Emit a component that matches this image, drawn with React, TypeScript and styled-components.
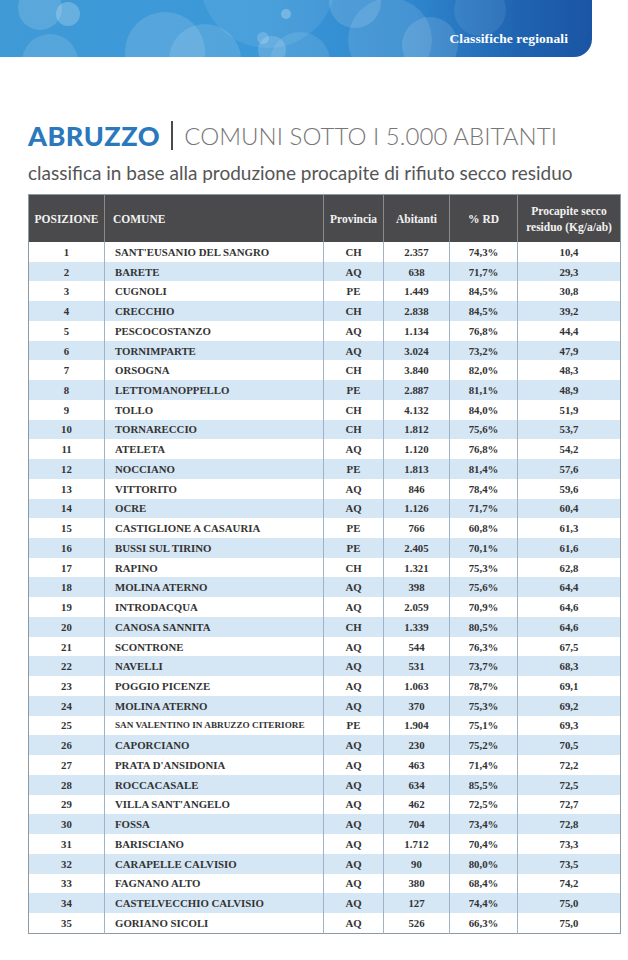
import React from "react";
import styled, { createGlobalStyle } from "styled-components";

const Global = createGlobalStyle`
  html, body { margin: 0; padding: 0; background: #ffffff; }
  body { width: 628px; height: 960px; overflow: hidden; }
`;

const Page = styled.div`
  width: 628px;
  height: 960px;
  background: #ffffff;
  display: flex;
  flex-direction: column;
`;

const Banner = styled.header`
  position: relative;
  width: 592px;
  height: 57px;
  border-bottom-right-radius: 18px;
  overflow: hidden;
  background: linear-gradient(90deg, #3f9ad6 0%, #3b98d8 45%, #2f86cd 70%, #1f63b0 88%, #1a55a4 100%);
  display: flex;
  align-items: flex-end;
  justify-content: flex-end;
  padding: 0 24px 10px 0;
  box-sizing: border-box;
`;

const Bubbles = styled.svg`
  position: absolute;
  inset: 0;
`;

const BannerLabel = styled.span`
  position: relative;
  color: #ffffff;
  font-family: "Liberation Serif", "DejaVu Serif", serif;
  font-size: 13.5px;
  font-weight: 700;
  letter-spacing: 0.1px;
`;

const TitleBlock = styled.div`
  margin: 60px 0 0 28px;
  display: flex;
  flex-direction: column;
`;

const TitleLine = styled.div`
  display: flex;
  align-items: center;
  height: 36px;
  font-family: "Lato", "Open Sans", sans-serif;
`;

const Region = styled.span`
  color: #2b78bd;
  font-size: 27px;
  font-weight: 900;
  letter-spacing: 0.5px;
`;

const Bar = styled.span`
  width: 2px;
  height: 29px;
  background: #4a4a4a;
  margin: 0 11px 0 11px;
`;

const Sub = styled.span`
  color: #767676;
  font-size: 24px;
  font-weight: 300;
  letter-spacing: 0.05px;
`;

const Subtitle = styled.div`
  margin-top: 8px;
  font-family: "Lato", "Open Sans", sans-serif;
  font-size: 19px;
  font-weight: 400;
  color: #555555;
  letter-spacing: 0;
`;

const Table = styled.table`
  margin: 10px 0 0 28px;
  width: 592px;
  border-collapse: collapse;
  table-layout: fixed;
  font-family: "Liberation Serif", "DejaVu Serif", serif;
  border: 1px solid #8c9aa8;
`;

const Th = styled.th<{ $align?: string }>`
  background: #4a4a4c;
  color: #f2f2f2;
  height: 47px;
  padding: 0 ${(p) => (p.$align === "left" ? "8px" : "2px")};
  font-size: 11.5px;
  font-weight: 700;
  line-height: 16px;
  text-align: ${(p) => p.$align || "center"};
  border-left: 1px solid #8a8a8a;
  &:first-child { border-left: none; }
`;

const Tr = styled.tr<{ $alt: boolean }>`
  background: ${(p) => (p.$alt ? "#d5e6f5" : "#ffffff")};
`;

const Td = styled.td<{ $align?: string; $small?: boolean }>`
  height: 19.74px;
  padding: 0 ${(p) => (p.$align === "left" ? "10px" : "2px")};
  font-size: ${(p) => (p.$small ? "9.2px" : "10.8px")};
  font-weight: 700;
  color: #333333;
  text-align: ${(p) => p.$align || "center"};
  border-left: 1px solid #9fb2c6;
  white-space: nowrap;
  line-height: 12px;
  &:first-child { border-left: none; }
`;

type Row = [string, string, string, string, string];

const rows: Row[] = [
  ["SANT'EUSANIO DEL SANGRO", "CH", "2.357", "74,3%", "10,4"],
  ["BARETE", "AQ", "638", "71,7%", "29,3"],
  ["CUGNOLI", "PE", "1.449", "84,5%", "30,8"],
  ["CRECCHIO", "CH", "2.838", "84,5%", "39,2"],
  ["PESCOCOSTANZO", "AQ", "1.134", "76,8%", "44,4"],
  ["TORNIMPARTE", "AQ", "3.024", "73,2%", "47,9"],
  ["ORSOGNA", "CH", "3.840", "82,0%", "48,3"],
  ["LETTOMANOPPELLO", "PE", "2.887", "81,1%", "48,9"],
  ["TOLLO", "CH", "4.132", "84,0%", "51,9"],
  ["TORNARECCIO", "CH", "1.812", "75,6%", "53,7"],
  ["ATELETA", "AQ", "1.120", "76,8%", "54,2"],
  ["NOCCIANO", "PE", "1.813", "81,4%", "57,6"],
  ["VITTORITO", "AQ", "846", "78,4%", "59,6"],
  ["OCRE", "AQ", "1.126", "71,7%", "60,4"],
  ["CASTIGLIONE A CASAURIA", "PE", "766", "60,8%", "61,3"],
  ["BUSSI SUL TIRINO", "PE", "2.405", "70,1%", "61,6"],
  ["RAPINO", "CH", "1.321", "75,3%", "62,8"],
  ["MOLINA ATERNO", "AQ", "398", "75,6%", "64,4"],
  ["INTRODACQUA", "AQ", "2.059", "70,9%", "64,6"],
  ["CANOSA SANNITA", "CH", "1.339", "80,5%", "64,6"],
  ["SCONTRONE", "AQ", "544", "76,3%", "67,5"],
  ["NAVELLI", "AQ", "531", "73,7%", "68,3"],
  ["POGGIO PICENZE", "AQ", "1.063", "78,7%", "69,1"],
  ["MOLINA ATERNO", "AQ", "370", "75,3%", "69,2"],
  ["SAN VALENTINO IN ABRUZZO CITERIORE", "PE", "1.904", "75,1%", "69,3"],
  ["CAPORCIANO", "AQ", "230", "75,2%", "70,5"],
  ["PRATA D'ANSIDONIA", "AQ", "463", "71,4%", "72,2"],
  ["ROCCACASALE", "AQ", "634", "85,5%", "72,5"],
  ["VILLA SANT'ANGELO", "AQ", "462", "72,5%", "72,7"],
  ["FOSSA", "AQ", "704", "73,4%", "72,8"],
  ["BARISCIANO", "AQ", "1.712", "70,4%", "73,3"],
  ["CARAPELLE CALVISIO", "AQ", "90", "80,0%", "73,5"],
  ["FAGNANO ALTO", "AQ", "380", "68,4%", "74,2"],
  ["CASTELVECCHIO CALVISIO", "AQ", "127", "74,4%", "75,0"],
  ["GORIANO SICOLI", "AQ", "526", "66,3%", "75,0"],
];

const bubbles = [
  { cx: 40, cy: 8, r: 22, o: 0.14 },
  { cx: 68, cy: 14, r: 12, o: 0.22 },
  { cx: 50, cy: 62, r: 28, o: 0.12 },
  { cx: 165, cy: 52, r: 40, o: 0.13 },
  { cx: 205, cy: 60, r: 36, o: 0.12 },
  { cx: 268, cy: -20, r: 68, o: 0.08 },
  { cx: 286, cy: 14, r: 5, o: 0.25 },
  { cx: 272, cy: 50, r: 14, o: 0.16 },
  { cx: 263, cy: 38, r: 6, o: 0.18 },
  { cx: 355, cy: 2, r: 26, o: 0.13 },
  { cx: 390, cy: 40, r: 42, o: 0.11 },
  { cx: 430, cy: 45, r: 28, o: 0.12 },
  { cx: 300, cy: 62, r: 30, o: 0.1 },
  { cx: 480, cy: 10, r: 26, o: 0.08 },
];

export default function App() {
  return (
    <Page>
      <Global />
      <Banner>
        <Bubbles width="592" height="57" viewBox="0 0 592 57">
          {bubbles.map((b, i) => (
            <circle key={i} cx={b.cx} cy={b.cy} r={b.r} fill="#ffffff" fillOpacity={b.o} />
          ))}
        </Bubbles>
        <BannerLabel>Classifiche regionali</BannerLabel>
      </Banner>
      <TitleBlock>
        <TitleLine>
          <Region>ABRUZZO</Region>
          <Bar />
          <Sub>COMUNI SOTTO I 5.000 ABITANTI</Sub>
        </TitleLine>
        <Subtitle>classifica in base alla produzione procapite di rifiuto secco residuo</Subtitle>
      </TitleBlock>
      <Table>
        <colgroup>
          <col style={{ width: 76 }} />
          <col style={{ width: 219 }} />
          <col style={{ width: 60 }} />
          <col style={{ width: 66 }} />
          <col style={{ width: 68 }} />
          <col style={{ width: 103 }} />
        </colgroup>
        <thead>
          <tr>
            <Th>POSIZIONE</Th>
            <Th $align="left">COMUNE</Th>
            <Th>Provincia</Th>
            <Th>Abitanti</Th>
            <Th>% RD</Th>
            <Th>
              Procapite secco
              <br />
              residuo (Kg/a/ab)
            </Th>
          </tr>
        </thead>
        <tbody>
          {rows.map((r, i) => (
            <Tr key={i} $alt={i % 2 === 1}>
              <Td>{i + 1}</Td>
              <Td $align="left" $small={r[0].length > 28}>
                {r[0]}
              </Td>
              <Td>{r[1]}</Td>
              <Td>{r[2]}</Td>
              <Td>{r[3]}</Td>
              <Td>{r[4]}</Td>
            </Tr>
          ))}
        </tbody>
      </Table>
    </Page>
  );
}
